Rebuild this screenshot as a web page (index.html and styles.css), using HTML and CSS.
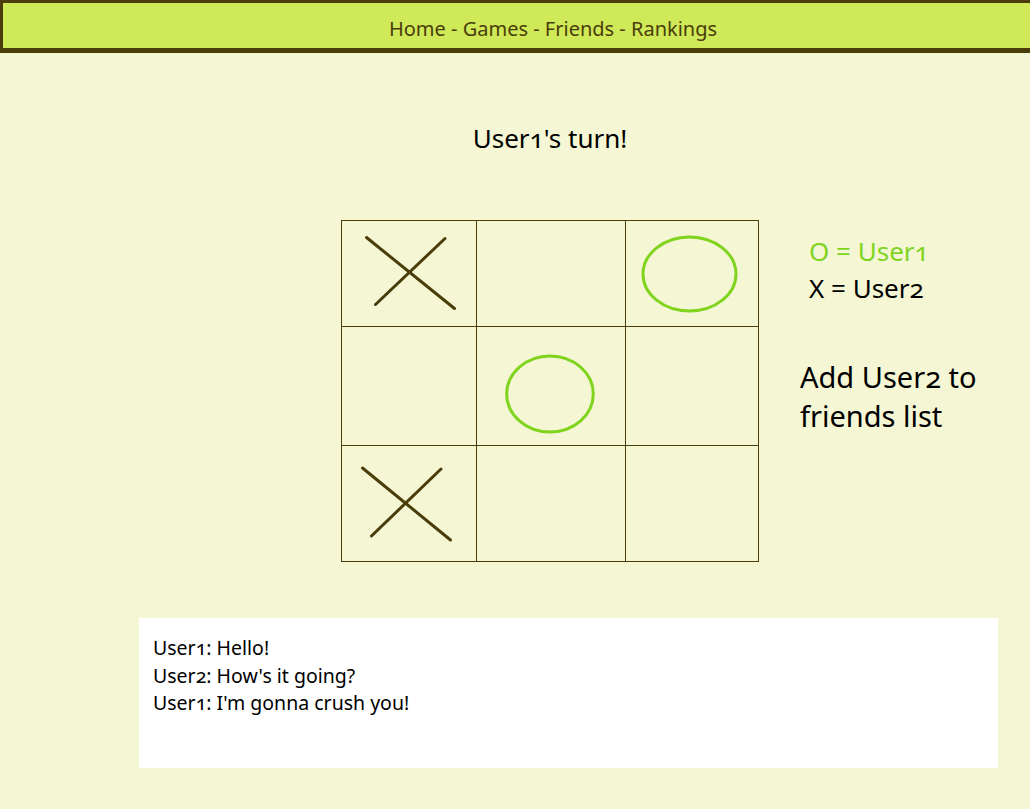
FILE: index.html
```html
<!DOCTYPE html>
<html>
<head>
<meta charset="utf-8">
<link rel="stylesheet" href="styles.css">
</head>
<body>
<div class="page">
  <nav class="nav">Home - Games - Friends - Rankings</nav>
  <h1 class="turn">User1's turn!</h1>
  <div class="game">
    <div class="spacer"></div>
    <div class="board">
      <div class="cell">
        <svg width="134" height="105" viewBox="0 0 134 105"><g stroke="#4a3d0a" stroke-width="3" stroke-linecap="round"><line x1="24.5" y1="16.5" x2="112.5" y2="87.5"/><line x1="33.5" y1="83.5" x2="103" y2="17.5"/></g></svg>
      </div>
      <div class="cell"></div>
      <div class="cell">
        <svg width="132" height="105" viewBox="0 0 132 105"><ellipse cx="63.5" cy="53" rx="46.5" ry="37" fill="none" stroke="#80d41e" stroke-width="3"/></svg>
      </div>
      <div class="cell"></div>
      <div class="cell">
        <svg width="148" height="118" viewBox="0 0 148 118"><ellipse cx="73" cy="67" rx="43.3" ry="38" fill="none" stroke="#80d41e" stroke-width="3"/></svg>
      </div>
      <div class="cell"></div>
      <div class="cell">
        <svg width="134" height="115" viewBox="0 0 134 115"><g stroke="#4a3d0a" stroke-width="3" stroke-linecap="round"><line x1="20.5" y1="22" x2="108.5" y2="94"/><line x1="29.5" y1="90" x2="99" y2="23"/></g></svg>
      </div>
      <div class="cell"></div>
      <div class="cell"></div>
    </div>
    <div class="side">
      <div class="legend">
        <div class="legend-o">O = User1</div>
        <div class="legend-x">X = User2</div>
      </div>
      <div class="add">Add User2 to<br>friends list</div>
    </div>
  </div>
  <div class="chat">
    <div>User1: Hello!</div>
    <div>User2: How's it going?</div>
    <div>User1: I'm gonna crush you!</div>
  </div>
</div>
</body>
</html>
```

FILE: styles.css
```css
html, body {
  margin: 0;
  padding: 0;
  background: #f4f6d4;
  overflow: hidden;
}
body {
  font-family: "Noto Sans", "Open Sans", sans-serif;
  font-variant-numeric: oldstyle-nums;
  color: #000;
}
.page {
  width: 1030px;
  height: 809px;
}
.nav {
  background: #cfe958;
  border-top: 3px solid #4a3d0a;
  border-left: 3px solid #4a3d0a;
  border-bottom: 5px solid #4a3d0a;
  height: 42px;
  padding-top: 3px;
  padding-left: 73px;
  line-height: 45px;
  text-align: center;
  color: #4a3d0a;
  font-size: 20px;
}
.turn {
  margin: 0;
  padding-top: 68px;
  padding-left: 70px;
  height: 34px;
  line-height: 34px;
  text-align: center;
  font-weight: normal;
  font-size: 26px;
}
.game {
  margin-top: 65px;
  padding-left: 70px;
  display: grid;
  grid-template-columns: 1fr auto 1fr;
}
.board {
  display: grid;
  grid-template-columns: 134px 148px 132px;
  grid-template-rows: 105px 118px 115px;
  gap: 1px;
  background: #4a3d0a;
  border: 1px solid #4a3d0a;
}
.cell {
  background: #f4f6d4;
  overflow: hidden;
}
.cell svg { display: block; }
.side {
  padding-left: 41px;
  padding-top: 13px;
}
.legend {
  padding-left: 9px;
  font-size: 26px;
  line-height: 37px;
}
.legend-o { color: #80d41e; }
.add {
  margin-top: 50px;
  font-size: 29px;
  line-height: 39px;
}
.chat {
  margin-top: 56px;
  margin-left: 139px;
  width: 845px;
  height: 134px;
  padding: 16px 0 0 14px;
  background: #fff;
  font-size: 19.5px;
  line-height: 27.5px;
}
```
